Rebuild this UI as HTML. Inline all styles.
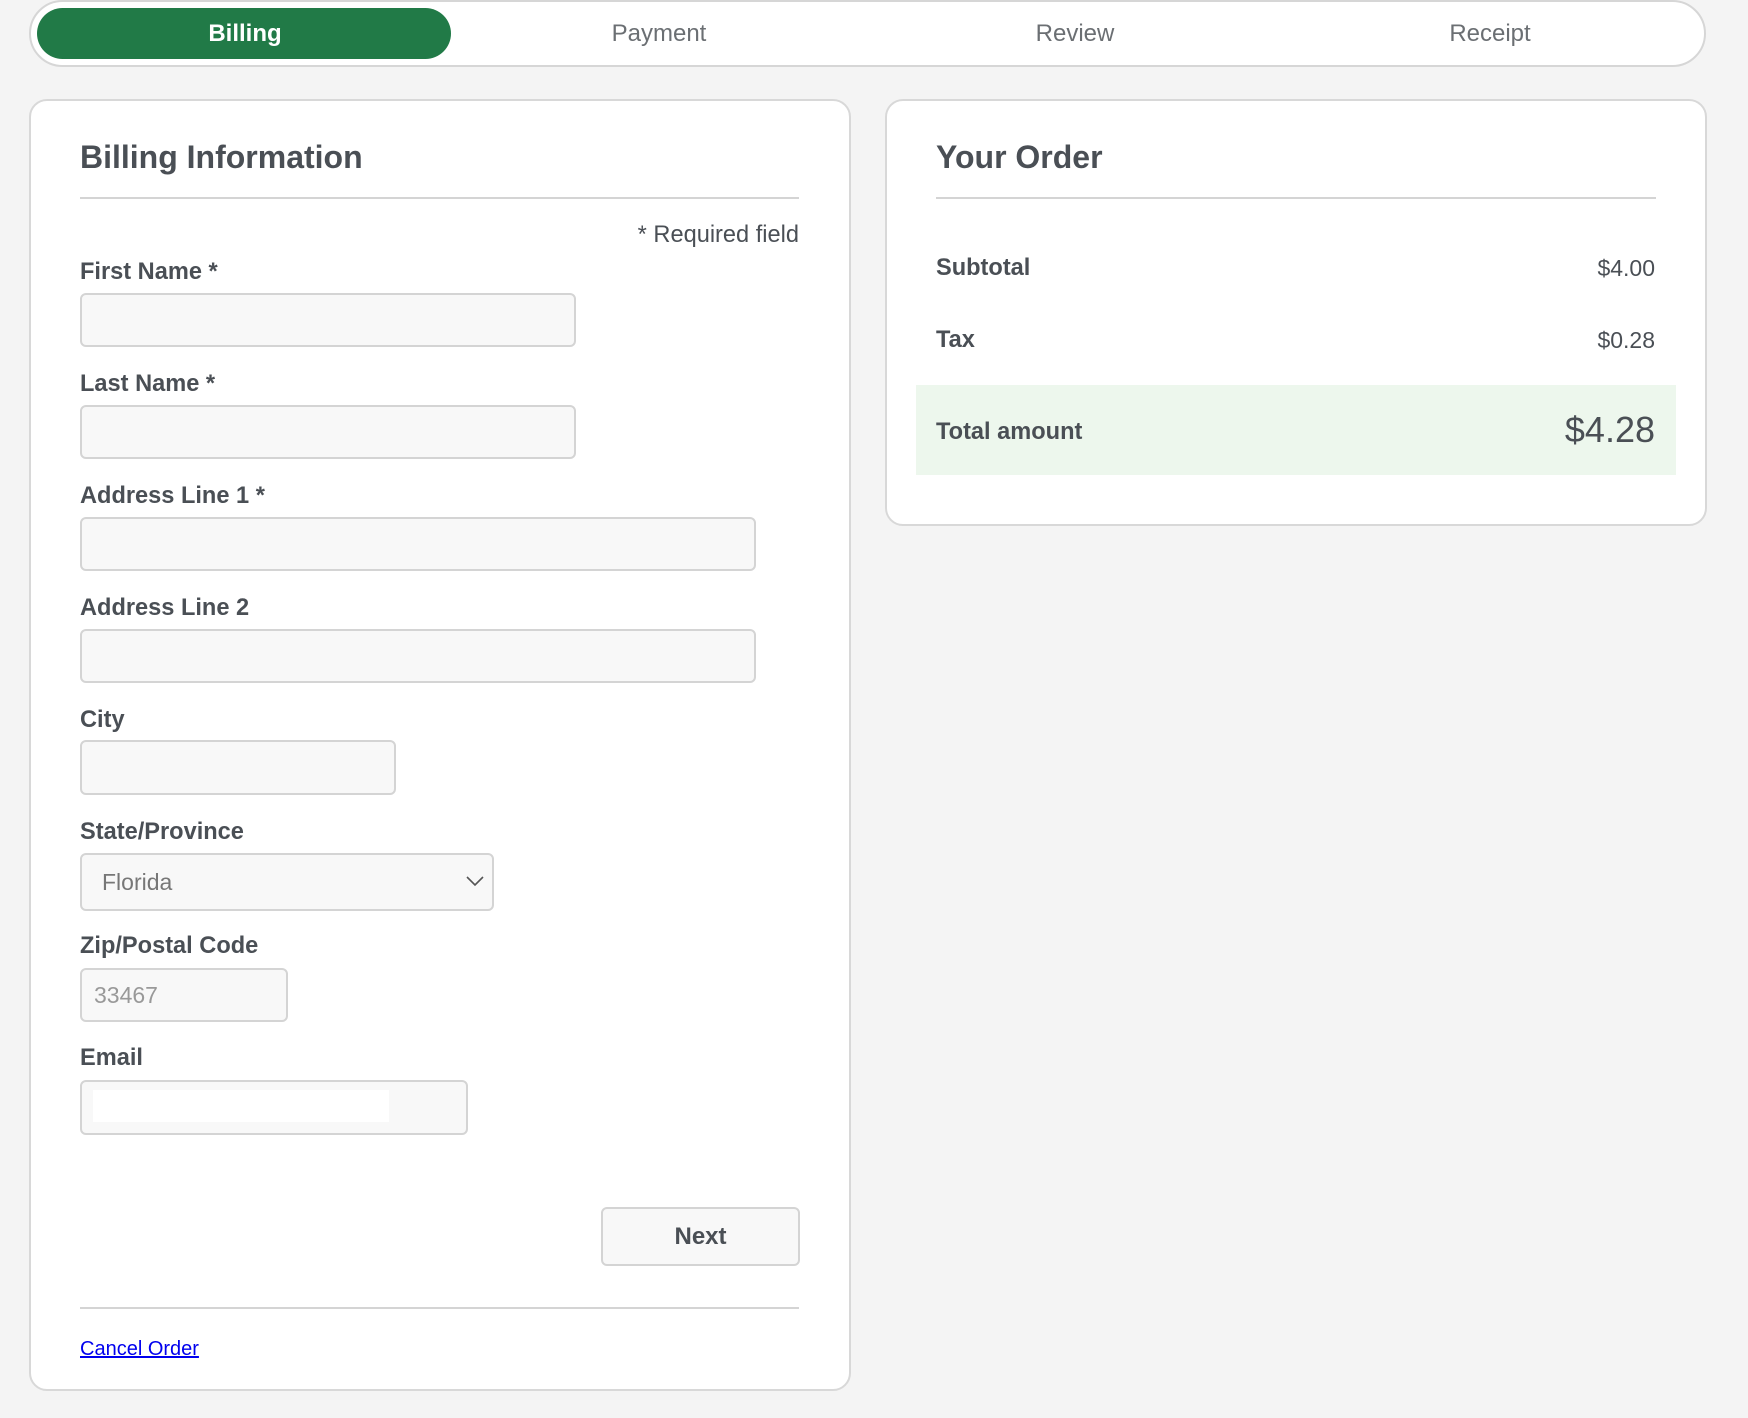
<!DOCTYPE html>
<html><head><meta charset="utf-8"><style>
*{box-sizing:border-box;margin:0;padding:0}
body{width:1748px;height:1418px;background:#f4f4f4;font-family:"Liberation Sans",Arial,sans-serif;color:#4a4f55;position:relative;overflow:hidden}
.abs{position:absolute}
.tabs{left:29px;top:0;width:1677px;height:67px;background:#fff;border:2px solid #d6d6d6;border-radius:34px}
.pill{left:37px;top:8px;width:414px;height:51px;background:#217a47;border-radius:26px}
.tab{top:8px;height:51px;width:416px;line-height:51px;text-align:center;font-size:24px;color:#6b6f73}
.card{background:#fff;border:2px solid #d8d8d8;border-radius:18px}
h2{position:absolute;font-size:32px;font-weight:bold;line-height:40px}
.hr{height:2px;background:#d4d4d4}
.lbl{font-size:23.6px;font-weight:bold;line-height:28px}
.inp{background:#f8f8f8;border:2px solid #d4d4d4;border-radius:6px}
</style></head><body>
<div class="abs tabs"></div>
<div class="abs pill"></div>
<div class="abs tab" style="left:37px;color:#fff;font-weight:bold">Billing</div>
<div class="abs tab" style="left:451px">Payment</div>
<div class="abs tab" style="left:867px">Review</div>
<div class="abs tab" style="left:1282px">Receipt</div>

<div class="abs card" style="left:29px;top:99px;width:822px;height:1292px"></div>
<h2 style="left:80px;top:137px">Billing Information</h2>
<div class="abs hr" style="left:80px;top:197px;width:719px"></div>
<div class="abs" style="right:949px;top:221px;font-size:23.6px;line-height:28px">* Required field</div>

<div class="abs lbl" style="left:80px;top:258px">First Name *</div>
<div class="abs inp" style="left:80px;top:293px;width:496px;height:54px"></div>
<div class="abs lbl" style="left:80px;top:370px">Last Name *</div>
<div class="abs inp" style="left:80px;top:405px;width:496px;height:54px"></div>
<div class="abs lbl" style="left:80px;top:482px">Address Line 1 *</div>
<div class="abs inp" style="left:80px;top:517px;width:676px;height:54px"></div>
<div class="abs lbl" style="left:80px;top:594px">Address Line 2</div>
<div class="abs inp" style="left:80px;top:629px;width:676px;height:54px"></div>
<div class="abs lbl" style="left:80px;top:706px">City</div>
<div class="abs inp" style="left:80px;top:740px;width:316px;height:55px"></div>
<div class="abs lbl" style="left:80px;top:818px">State/Province</div>
<div class="abs inp" style="left:80px;top:853px;width:414px;height:58px"></div>
<div class="abs" style="left:102px;top:866px;font-size:23px;line-height:32px;color:#777">Florida</div>
<svg class="abs" style="left:466px;top:874px" width="18" height="14" viewBox="0 0 18 14"><path d="M1 3 L9 11 L17 3" fill="none" stroke="#555" stroke-width="1.6"/></svg>
<div class="abs lbl" style="left:80px;top:932px">Zip/Postal Code</div>
<div class="abs inp" style="left:80px;top:968px;width:208px;height:54px"></div>
<div class="abs" style="left:94px;top:979px;font-size:23px;line-height:32px;color:#999">33467</div>
<div class="abs lbl" style="left:80px;top:1044px">Email</div>
<div class="abs inp" style="left:80px;top:1080px;width:388px;height:55px"></div>
<div class="abs" style="left:93px;top:1090px;width:296px;height:32px;background:#fff"></div>
<div class="abs inp" style="left:601px;top:1207px;width:199px;height:59px;text-align:center;line-height:55px;font-size:24px;font-weight:bold">Next</div>
<div class="abs hr" style="left:80px;top:1307px;width:719px"></div>
<a class="abs" style="left:80px;top:1337px;font-size:20px;line-height:24px;color:#0000ee;text-decoration:underline">Cancel Order</a>

<div class="abs card" style="left:885px;top:99px;width:822px;height:427px"></div>
<h2 style="left:936px;top:137px">Your Order</h2>
<div class="abs hr" style="left:936px;top:197px;width:720px"></div>
<div class="abs lbl" style="left:936px;top:254px">Subtotal</div>
<div class="abs" style="right:93px;top:254px;font-size:23px;line-height:28px">$4.00</div>
<div class="abs lbl" style="left:936px;top:326px">Tax</div>
<div class="abs" style="right:93px;top:326px;font-size:23px;line-height:28px">$0.28</div>
<div class="abs" style="left:916px;top:385px;width:760px;height:90px;background:#edf7ed"></div>
<div class="abs lbl" style="left:936px;top:418px">Total amount</div>
<div class="abs" style="right:93px;top:408px;font-size:36px;line-height:44px">$4.28</div>
</body></html>
